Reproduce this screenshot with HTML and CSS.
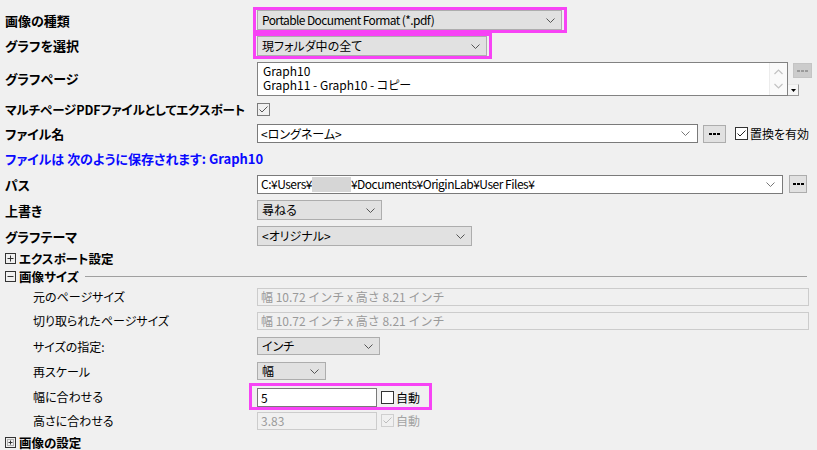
FILE: index.html
```html
<!DOCTYPE html>
<html lang="ja">
<head>
<meta charset="utf-8">
<link rel="stylesheet" href="styles.css">
</head>
<body>
<div class="panel">
  <div class="row h26">
    <div class="lbl b">画像の種類</div>
    <div class="ctl">
      <div class="hl hl-top">
        <div class="sel" style="width:305px"><span class="narrow">Portable Document Format (*.pdf)</span><svg class="chev" width="9" height="5" viewBox="0 0 9 5"><path d="M0.5 0.5 L4.5 4.5 L8.5 0.5" fill="none" stroke="#555" stroke-width="1"/></svg></div>
      </div>
    </div>
  </div>
  <div class="row h26">
    <div class="lbl b up1">グラフを選択</div>
    <div class="ctl">
      <div class="hl hl-top">
        <div class="sel" style="width:230px"><span>現フォルダ中の全て</span><svg class="chev" width="9" height="5" viewBox="0 0 9 5"><path d="M0.5 0.5 L4.5 4.5 L8.5 0.5" fill="none" stroke="#555" stroke-width="1"/></svg></div>
      </div>
    </div>
  </div>
  <div class="row h40">
    <div class="lbl b up1">グラフページ</div>
    <div class="ctl">
      <div class="listbox">
        <div class="lines">
          <div>Graph10</div>
          <div>Graph11 - Graph10 - コピー</div>
        </div>
        <div class="vscroll">
          <svg width="9" height="6" viewBox="0 0 9 6"><path d="M0.5 5 L4.5 1 L8.5 5" fill="none" stroke="#c2c2c2" stroke-width="1.2"/></svg>
          <svg width="9" height="6" viewBox="0 0 9 6"><path d="M0.5 1 L4.5 5 L8.5 1" fill="none" stroke="#c2c2c2" stroke-width="1.2"/></svg>
        </div>
      </div>
      <div class="side">
        <div class="dots-dis"><svg width="11" height="2" viewBox="0 0 11 2"><rect x="0" y="0" width="3" height="2" fill="#9a9a9a"/><rect x="4" y="0" width="3" height="2" fill="#9a9a9a"/><rect x="8" y="0" width="3" height="2" fill="#9a9a9a"/></svg></div>
        <div class="ddbtn"><svg width="5" height="3" viewBox="0 0 5 3"><path d="M0 0 H5 L2.5 3 Z" fill="#000"/></svg></div>
      </div>
    </div>
  </div>
  <div class="row h20">
    <div class="lbl b long">マルチページPDFファイルとしてエクスポート</div>
    <div class="ctl">
      <svg class="cb" width="13" height="13" viewBox="0 0 13 13"><rect x="0.5" y="0.5" width="12" height="12" fill="#f0f0f0" stroke="#7a7a7a"/><path d="M2.5 6.5 L5 9 L10.5 3.5" fill="none" stroke="#555" stroke-width="1"/></svg>
    </div>
  </div>
  <div class="row h29">
    <div class="lbl b">ファイル名</div>
    <div class="ctl">
      <div class="inp combo" style="width:441px"><span>&lt;ロングネーム&gt;</span><svg class="chev" width="9" height="5" viewBox="0 0 9 5"><path d="M0.5 0.5 L4.5 4.5 L8.5 0.5" fill="none" stroke="#777" stroke-width="1"/></svg></div>
      <div class="dots" style="width:23px;margin-left:5px"><svg width="11" height="2" viewBox="0 0 11 2"><rect x="0" y="0" width="3" height="2" fill="#000"/><rect x="4" y="0" width="3" height="2" fill="#000"/><rect x="8" y="0" width="3" height="2" fill="#000"/></svg></div>
      <label class="chk" style="margin-left:9px"><svg width="13" height="13" viewBox="0 0 13 13"><rect x="0.5" y="0.5" width="12" height="12" fill="#fff" stroke="#333"/><path d="M2.5 6.5 L5 9 L10.5 3.5" fill="none" stroke="#222" stroke-width="1"/></svg><span>置換を有効</span></label>
    </div>
  </div>
  <div class="row h20">
    <div class="lbl b blue">ファイルは 次のように保存されます: Graph10</div>
    <div class="ctl"></div>
  </div>
  <div class="row h29 padtop">
    <div class="lbl b">パス</div>
    <div class="ctl">
      <div class="inp combo" style="width:526px"><span class="path">C:¥Users¥<i class="redact"></i>¥Documents¥OriginLab¥User Files¥</span><svg class="chev" width="9" height="5" viewBox="0 0 9 5"><path d="M0.5 0.5 L4.5 4.5 L8.5 0.5" fill="none" stroke="#777" stroke-width="1"/></svg></div>
      <div class="dots" style="width:18px;margin-left:6px"><svg width="11" height="2" viewBox="0 0 11 2"><rect x="0" y="0" width="3" height="2" fill="#000"/><rect x="4" y="0" width="3" height="2" fill="#000"/><rect x="8" y="0" width="3" height="2" fill="#000"/></svg></div>
    </div>
  </div>
  <div class="row h26">
    <div class="lbl b">上書き</div>
    <div class="ctl">
      <div class="sel" style="width:125px"><span>尋ねる</span><svg class="chev" width="9" height="5" viewBox="0 0 9 5"><path d="M0.5 0.5 L4.5 4.5 L8.5 0.5" fill="none" stroke="#555" stroke-width="1"/></svg></div>
    </div>
  </div>
  <div class="row h26">
    <div class="lbl b">グラフテーマ</div>
    <div class="ctl">
      <div class="sel" style="width:215px"><span>&lt;オリジナル&gt;</span><svg class="chev" width="9" height="5" viewBox="0 0 9 5"><path d="M0.5 0.5 L4.5 4.5 L8.5 0.5" fill="none" stroke="#555" stroke-width="1"/></svg></div>
    </div>
  </div>
  <div class="sect h18">
    <svg class="tog" width="11" height="11" viewBox="0 0 11 11"><rect x="0.5" y="0.5" width="10" height="10" fill="none" stroke="#333"/><path d="M2.5 5.5 H8.5 M5.5 2.5 V8.5" stroke="#333" stroke-width="1"/></svg>
    <span class="b hd">エクスポート設定</span>
  </div>
  <div class="sect h18">
    <svg class="tog" width="11" height="11" viewBox="0 0 11 11"><rect x="0.5" y="0.5" width="10" height="10" fill="none" stroke="#333"/><path d="M2.5 5.5 H8.5" stroke="#333" stroke-width="1"/></svg>
    <span class="b hd">画像サイズ</span>
    <div class="rule"></div>
  </div>
  <div class="row h23">
    <div class="lbl ind">元のページサイズ</div>
    <div class="ctl"><div class="dis" style="width:552px">幅 10.72 インチ x 高さ 8.21 インチ</div></div>
  </div>
  <div class="row h25">
    <div class="lbl ind">切り取られたページサイズ</div>
    <div class="ctl"><div class="dis" style="width:552px">幅 10.72 インチ x 高さ 8.21 インチ</div></div>
  </div>
  <div class="row h26">
    <div class="lbl ind">サイズの指定:</div>
    <div class="ctl">
      <div class="sel h18s" style="width:123px"><span>インチ</span><svg class="chev" width="9" height="5" viewBox="0 0 9 5"><path d="M0.5 0.5 L4.5 4.5 L8.5 0.5" fill="none" stroke="#555" stroke-width="1"/></svg></div>
    </div>
  </div>
  <div class="row h24">
    <div class="lbl ind">再スケール</div>
    <div class="ctl">
      <div class="sel h18s" style="width:69px"><span>幅</span><svg class="chev" width="9" height="5" viewBox="0 0 9 5"><path d="M0.5 0.5 L4.5 4.5 L8.5 0.5" fill="none" stroke="#555" stroke-width="1"/></svg></div>
    </div>
  </div>
  <div class="row h26">
    <div class="lbl ind">幅に合わせる</div>
    <div class="ctl">
      <div class="hl hl-fit">
        <div class="inp" style="width:120px"><span>5</span></div>
        <label class="chk" style="margin-left:4px"><svg width="13" height="13" viewBox="0 0 13 13"><rect x="0.5" y="0.5" width="12" height="12" fill="#fff" stroke="#333"/></svg><span>自動</span></label>
      </div>
    </div>
  </div>
  <div class="row h23">
    <div class="lbl ind">高さに合わせる</div>
    <div class="ctl">
      <div class="dis" style="width:120px">3.83</div>
      <label class="chk dimmed" style="margin-left:4px"><svg width="13" height="13" viewBox="0 0 13 13"><rect x="0.5" y="0.5" width="12" height="12" fill="#f0f0f0" stroke="#cfcfcf"/><path d="M2.5 6.5 L5 9 L10.5 3.5" fill="none" stroke="#bdbdbd" stroke-width="1"/></svg><span>自動</span></label>
    </div>
  </div>
  <div class="sect h20">
    <svg class="tog" width="11" height="11" viewBox="0 0 11 11"><rect x="0.5" y="0.5" width="10" height="10" fill="none" stroke="#333"/><rect x="2.5" y="2.5" width="6" height="6" fill="none" stroke="#777" stroke-dasharray="1 1"/><path d="M3.5 5.5 H7.5 M5.5 3.5 V7.5" stroke="#333" stroke-width="1"/></svg>
    <span class="b hd">画像の設定</span>
  </div>
</div>
</body>
</html>
```
FILE: styles.css
```css
* { box-sizing: border-box; }
html, body { margin: 0; padding: 0; }
body {
  width: 817px;
  height: 450px;
  overflow: hidden;
  background: #f0f0f0;
  color: #000;
  font-family: "Noto Sans CJK JP", "Liberation Sans", sans-serif;
  font-size: 12px;
  font-feature-settings: "palt";
}
.panel {
  padding: 7px 0 0 5px;
  display: flex;
  flex-direction: column;
}
.row {
  display: grid;
  grid-template-columns: 252px 1fr;
  align-items: center;
}
.h18 { height: 18px; }
.h20 { height: 20px; }
.h23 { height: 23px; }
.h24 { height: 24px; }
.h25 { height: 25px; }
.h26 { height: 26px; }
.h29 { height: 29px; }
.h40 { height: 40px; }
.padtop { padding-top: 3px; }
.lbl { line-height: 15px; white-space: nowrap; }
.b { font-weight: bold; }
.lbl.b { font-size: 13px; }
.lbl.b.long { font-size: 12.5px; letter-spacing: -0.1px; }
.up1 { margin-top: -2px; }
.hd { font-size: 12.5px; }
.ind { padding-left: 28px; }
.blue { color: #0a0aff; }
.ctl {
  display: flex;
  align-items: center;
  min-width: 0;
}
.hl {
  display: flex;
  align-items: center;
  border: 3px solid #f743f5;
}
.hl-top {
  margin-left: -4px;
  padding: 0 2px 0 1px;
}
.hl-fit {
  margin-left: -8px;
  padding: 2px 9px 0 5px;
}
.sel {
  height: 20px;
  background: #e1e1e1;
  border: 1px solid #adadad;
  display: flex;
  align-items: center;
  justify-content: space-between;
  padding: 0 6px 0 4px;
  line-height: 14px;
  white-space: nowrap;
}
.sel.h18s { height: 18px; }
.narrow { letter-spacing: -0.6px; }
.chev { flex: none; }
.inp {
  height: 19px;
  background: #fff;
  border: 1px solid #7a7a7a;
  display: flex;
  align-items: center;
  padding: 0 4px 0 3px;
  line-height: 14px;
  white-space: nowrap;
}
.combo { justify-content: space-between; padding-right: 7px; }
.path { display: flex; align-items: center; letter-spacing: -0.5px; }
.redact {
  display: inline-block;
  width: 39px;
  height: 15px;
  background: #d6d6d6;
}
.listbox {
  width: 531px;
  height: 34px;
  background: #fff;
  border: 1px solid #828282;
  display: flex;
}
.lines {
  flex: 1;
  padding: 1px 0 0 5px;
  line-height: 14px;
}
.vscroll {
  width: 18px;
  border-left: 1px solid #ececec;
  background: #fafafa;
  display: flex;
  flex-direction: column;
  align-items: center;
  justify-content: space-between;
  padding: 6px 0 6px 0;
}
.side {
  width: 24px;
  height: 34px;
  position: relative;
}
.dots-dis {
  position: absolute;
  left: 5px;
  top: 1px;
  width: 19px;
  height: 15px;
  background: #cccccc;
  border: 1px solid #c4c4c4;
  display: flex;
  align-items: center;
  justify-content: center;
}
.ddbtn {
  position: absolute;
  left: 0;
  top: 22px;
  width: 11px;
  height: 12px;
  background: #f6f6f6;
  border: 1px solid #9a9a9a;
  border-left: none;
  border-top-color: #e8e8e8;
  display: flex;
  align-items: center;
  justify-content: center;
}
.dots {
  height: 18px;
  background: #e1e1e1;
  border: 1px solid #adadad;
  display: flex;
  align-items: center;
  justify-content: center;
  flex: none;
}
.chk {
  display: flex;
  align-items: center;
  gap: 2px;
  white-space: nowrap;
  line-height: 14px;
}
.chk svg { flex: none; }
.dimmed { color: #a3a3a3; }
.cb { flex: none; }
.dis {
  height: 18px;
  background: #f0f0f0;
  border: 1px solid #cccccc;
  color: #9a9a9a;
  display: flex;
  align-items: center;
  padding: 0 4px 0 3px;
  line-height: 14px;
  white-space: nowrap;
  font-feature-settings: normal;
}
.sect {
  display: flex;
  align-items: center;
  gap: 3px;
  line-height: 15px;
}
.tog { flex: none; }
.rule {
  flex: 1;
  height: 1px;
  background: #a0a0a0;
  margin: 0 10px 0 3px;
}
```
